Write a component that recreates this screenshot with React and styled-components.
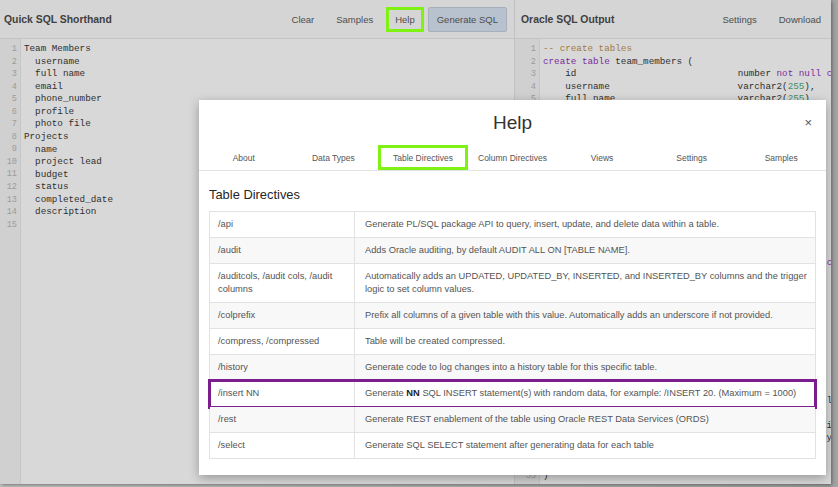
import React from 'react'
import styled, { createGlobalStyle } from 'styled-components'

const GlobalStyle = createGlobalStyle`
  html, body {
    margin: 0;
    padding: 0;
  }
  body {
    width: 838px;
    height: 487px;
    overflow: hidden;
    background: linear-gradient(90deg, #c8c8c8, #a4a4a4);
    font-family: "Liberation Sans", Arial, sans-serif;
  }
`

const Frame = styled.div`
  position: relative;
  width: 831px;
  height: 484px;
  display: flex;
  background: #d8d8d8;
  box-shadow: 1px 1px 4px rgba(0, 0, 0, 0.45);
  overflow: hidden;
`

const Pane = styled.section`
  width: ${p => p.$width}px;
  flex: none;
  display: flex;
  flex-direction: column;
  min-width: 0;
  overflow: hidden;
  border-right: ${p => (p.$divider ? '1px solid #c2c2c2' : 'none')};
`

const PaneHeader = styled.header`
  height: 39px;
  flex: none;
  box-sizing: border-box;
  display: flex;
  align-items: center;
  padding: 0 ${p => p.$padRight}px 0 ${p => p.$padLeft}px;
  background: #d5d5d5;
  border-bottom: 1px solid #c4c4c4;
`

const PaneTitle = styled.h2`
  margin: 0;
  flex: 1;
  font-size: 10.4px;
  font-weight: bold;
  color: #404040;
  white-space: nowrap;
`

const ToolButton = styled.button`
  flex: none;
  height: 25px;
  box-sizing: border-box;
  margin-left: ${p => p.$gap || 0}px;
  padding: 0 ${p => (p.$primary ? 8 : p.$marked ? 6 : 8)}px;
  font: 9.5px "Liberation Sans", Arial, sans-serif;
  color: #4d4d4d;
  white-space: nowrap;
  background: ${p => (p.$primary ? '#b8c2ce' : 'transparent')};
  border: ${p =>
    p.$primary ? '1px solid #a6b0bd' : p.$marked ? '3px solid #7ff214' : '3px solid transparent'};
  border-radius: ${p => (p.$primary ? '2px' : '0')};
`

const Editor = styled.div`
  flex: 1;
  display: flex;
  min-height: 0;
  overflow: hidden;
  font-family: "Liberation Mono", "Courier New", monospace;
  font-size: 9.27px;
  line-height: 12.56px;
`

const Gutter = styled.div`
  width: ${p => p.$width}px;
  flex: none;
  box-sizing: border-box;
  padding: 4px 3px 0 0;
  text-align: right;
  color: #9c9c9c;
  font-size: 8.6px;
  background: #d0d0d0;
  border-right: 1px solid #c6c6c6;
`

const LineNo = styled.div`
  height: 12.56px;
`

const Code = styled.pre`
  margin: 0;
  flex: 1;
  padding: 4px 0 0 3px;
  font: inherit;
  color: #2f2f2f;
  white-space: pre;
  overflow: hidden;
`

const Kw = styled.span`
  color: #7b2c9c;
`

const Comment = styled.span`
  color: #a27a45;
`

const Num = styled.span`
  color: #3d8f62;
`

const Modal = styled.div`
  position: absolute;
  left: 199px;
  top: 100px;
  width: 627px;
  height: 375px;
  display: flex;
  flex-direction: column;
  background: #ffffff;
  box-shadow: 0 3px 10px rgba(0, 0, 0, 0.3);
`

const ModalHead = styled.div`
  height: 45px;
  flex: none;
  display: grid;
  grid-template-columns: 1fr auto 1fr;
  align-items: center;
`

const ModalTitle = styled.h1`
  grid-column: 2;
  margin: 0;
  font-size: 19px;
  font-weight: normal;
  color: #333;
`

const CloseButton = styled.button`
  justify-self: end;
  margin-right: 14px;
  padding: 0;
  border: 0;
  background: none;
  font: 13px "Liberation Sans", Arial, sans-serif;
  color: #555;
`

const TabBar = styled.nav`
  display: grid;
  grid-template-columns: repeat(7, 1fr);
  border-bottom: 1px solid #e3e3e3;
`

const Tab = styled.div`
  height: 25px;
  box-sizing: border-box;
  display: flex;
  align-items: center;
  justify-content: center;
  font-size: 8.5px;
  color: #555;
  white-space: nowrap;
  border: 3px solid ${p => (p.$marked ? '#7ff214' : 'transparent')};
`

const ModalBody = styled.div`
  padding: 0 10px;
`

const SectionHeading = styled.h3`
  margin: 16px 0 8px;
  font-size: 12.9px;
  line-height: 16px;
  font-weight: normal;
  color: #262626;
`

const DirectiveTable = styled.div`
  border: 1px solid #e2e2e2;
  border-bottom: 0;
`

const Row = styled.div`
  display: grid;
  grid-template-columns: 144px 1fr;
  background: ${p => (p.$striped ? '#f8f8f8' : '#ffffff')};
  border-bottom: 1px solid #e2e2e2;
  outline: ${p => (p.$marked ? '3px solid #7c1d8e' : 'none')};
  outline-offset: -1px;
  position: relative;
`

const Cell = styled.div`
  padding: ${p => (p.$first ? '6px 8px' : '6px 4px 6px 10px')};
  font-size: 9.3px;
  line-height: 13px;
  color: #545454;
  border-left: ${p => (p.$first ? '0' : '1px solid #e2e2e2')};

  b {
    color: #222;
  }
`

const KEYWORDS = new Set([
  'create', 'table', 'not', 'null', 'constraint', 'primary', 'key', 'check', 'in',
  'references', 'on', 'delete', 'cascade', 'index', 'foreign'
])

function highlight(line, i) {
  if (line.trim().startsWith('--')) return <Comment key={i}>{line}</Comment>
  const parts = line.split(/(\b[a-z]+\b|\b\d+\b)/)
  return parts.map((part, j) => {
    if (KEYWORDS.has(part)) return <Kw key={j}>{part}</Kw>
    if (/^\d+$/.test(part)) return <Num key={j}>{part}</Num>
    return part
  })
}

const col = (name, type) => '    ' + name.padEnd(31) + type

const shorthand = [
  'Team Members',
  '  username',
  '  full name',
  '  email',
  '  phone_number',
  '  profile',
  '  photo file',
  'Projects',
  '  name',
  '  project lead',
  '  budget',
  '  status',
  '  completed_date',
  '  description',
  ''
]

const output = [
  '-- create tables',
  'create table team_members (',
  col('id', 'number not null constraint team_members_id_pk primary key,'),
  col('username', 'varchar2(255),'),
  col('full_name', 'varchar2(255),'),
  col('email', 'varchar2(255),'),
  col('phone_number', 'varchar2(255),'),
  col('profile', 'clob,'),
  col('photo_file', 'blob,'),
  col('photo_file_filename', 'varchar2(512),'),
  col('photo_file_mimetype', 'varchar2(512),'),
  col('photo_file_charset', 'varchar2(512),'),
  col('photo_file_lastupd', 'date'),
  ');',
  '',
  '',
  'create table projects (',
  col('id', 'number not null constraint projects_id_pk primary key,'),
  col('name', 'varchar2(255),'),
  col('project_lead', 'varchar2(255),'),
  col('budget', 'number,'),
  col('status', 'varchar2(60),'),
  col('completed_date', 'date,'),
  col('description', 'varchar2(4000)'),
  ');',
  '',
  '',
  '-- load data',
  col('insert into team_members (', 'id, username, full_name, email'),
  '',
  col('    phone_number', 'profile, photo_file constraint'),
  col('    photo_file_filename', 'photo_file_mimetype, spec'),
  '',
  '',
  ')',
  ''
]

const directives = [
  ['/api', 'Generate PL/SQL package API to query, insert, update, and delete data within a table.'],
  ['/audit', 'Adds Oracle auditing, by default AUDIT ALL ON [TABLE NAME].'],
  [
    '/auditcols, /audit cols, /audit columns',
    'Automatically adds an UPDATED, UPDATED_BY, INSERTED, and INSERTED_BY columns and the trigger logic to set column values.'
  ],
  ['/colprefix', 'Prefix all columns of a given table with this value. Automatically adds an underscore if not provided.'],
  ['/compress, /compressed', 'Table will be created compressed.'],
  ['/history', 'Generate code to log changes into a history table for this specific table.'],
  [
    '/insert NN',
    <>Generate <b>NN</b> SQL INSERT statement(s) with random data, for example: /INSERT 20. (Maximum = 1000)</>,
    true
  ],
  ['/rest', 'Generate REST enablement of the table using Oracle REST Data Services (ORDS)'],
  ['/select', 'Generate SQL SELECT statement after generating data for each table']
]

const tabs = ['About', 'Data Types', 'Table Directives', 'Column Directives', 'Views', 'Settings', 'Samples']

const App = () => {
  return (
    <>
      <GlobalStyle />
      <Frame>
        <Pane $width={514} $divider>
          <PaneHeader $padLeft={4} $padRight={7}>
            <PaneTitle>Quick SQL Shorthand</PaneTitle>
            <ToolButton>Clear</ToolButton>
            <ToolButton>Samples</ToolButton>
            <ToolButton $marked $gap={2}>Help</ToolButton>
            <ToolButton $primary $gap={4}>Generate SQL</ToolButton>
          </PaneHeader>
          <Editor>
            <Gutter $width={21}>
              {shorthand.map((_, i) => <LineNo key={i}>{i + 1}</LineNo>)}
            </Gutter>
            <Code>{shorthand.join('\n')}</Code>
          </Editor>
        </Pane>
        <Pane $width={317}>
          <PaneHeader $padLeft={6} $padRight={0}>
            <PaneTitle>Oracle SQL Output</PaneTitle>
            <ToolButton>Settings</ToolButton>
            <ToolButton>Download</ToolButton>
          </PaneHeader>
          <Editor>
            <Gutter $width={25}>
              {output.map((_, i) => <LineNo key={i}>{i + 1}</LineNo>)}
            </Gutter>
            <Code>
              {output.map((line, i) => (
                <React.Fragment key={i}>
                  {highlight(line, i)}
                  {'\n'}
                </React.Fragment>
              ))}
            </Code>
          </Editor>
        </Pane>

        <Modal>
          <ModalHead>
            <ModalTitle>Help</ModalTitle>
            <CloseButton>×</CloseButton>
          </ModalHead>
          <TabBar>
            {tabs.map(t => (
              <Tab key={t} $marked={t === 'Table Directives'}>{t}</Tab>
            ))}
          </TabBar>
          <ModalBody>
            <SectionHeading>Table Directives</SectionHeading>
            <DirectiveTable>
              {directives.map(([name, desc, marked], i) => (
                <Row key={name} $striped={i % 2 === 1} $marked={marked}>
                  <Cell $first>{name}</Cell>
                  <Cell>{desc}</Cell>
                </Row>
              ))}
            </DirectiveTable>
          </ModalBody>
        </Modal>
      </Frame>
    </>
  )
}

export default App
